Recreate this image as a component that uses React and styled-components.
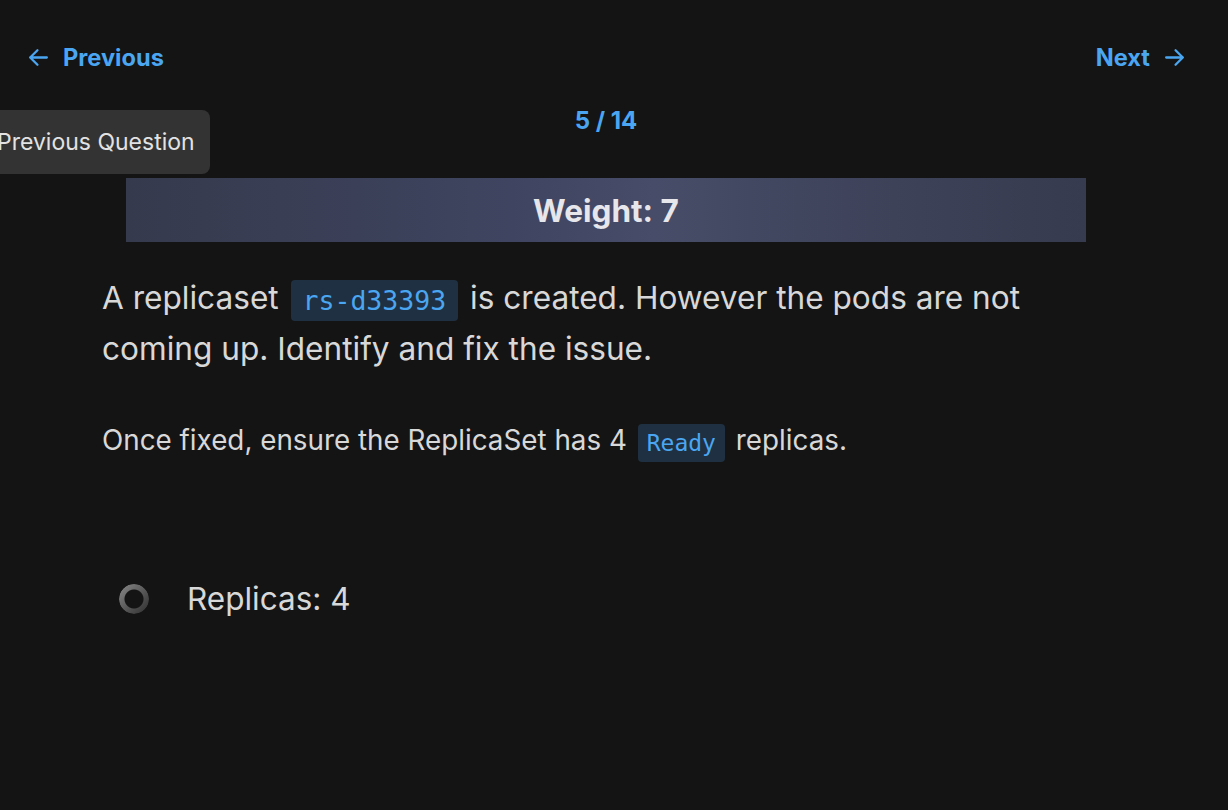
import React from 'react'
import styled, { createGlobalStyle } from 'styled-components'

const GlobalStyle = createGlobalStyle`
    html, body {
        margin: 0;
        padding: 0;
        background: #141414;
    }
    body {
        font-family: Inter, "Noto Sans", sans-serif;
        color: #d6d6d6;
        overflow: hidden;
    }
`

const Page = styled.div`
    position: relative;
    width: 1212px;
    height: 810px;
    padding-top: 35px;
    box-sizing: border-box;
`

const Nav = styled.div`
    display: flex;
    justify-content: space-between;
    align-items: center;
    height: 44px;
    padding: 0 25px 0 26px;
`

const NavLink = styled.a`
    display: flex;
    align-items: center;
    gap: 12px;
    color: #4ba6f1;
    font-size: 23.6px;
    font-weight: 700;
    cursor: pointer;
    svg {
        width: 25px;
        height: 25px;
    }
`

const Tooltip = styled.div`
    position: absolute;
    left: -19px;
    top: 110px;
    height: 64px;
    display: flex;
    align-items: center;
    padding: 0 15px 0 16px;
    background: #333333;
    border-radius: 8px;
    color: #e2e2e2;
    font-size: 23px;
`

const Counter = styled.div`
    margin-top: 28px;
    text-align: center;
    color: #4ba6f1;
    font-size: 24px;
    font-weight: 700;
    line-height: 28px;
`

const Content = styled.div`
    width: 1008px;
    margin: 0 auto;
`

const WeightBar = styled.div`
    margin: 43px 24px 0;
    height: 64px;
    display: flex;
    align-items: center;
    justify-content: center;
    background: linear-gradient(90deg, #353a4d 0%, #3f4460 40%, #474c68 55%, #3d4259 80%, #363b4f 100%);
    color: #e6e6eb;
    font-size: 31.5px;
    font-weight: 700;
`

const Question = styled.p`
    margin: 30px 0 0;
    font-size: 31.6px;
    line-height: 51px;
    color: #d8d8d8;
`

const Note = styled.p`
    margin: 46px 0 0;
    font-size: 27.8px;
    line-height: 40px;
    color: #d8d8d8;
`

const Code = styled.code`
    display: inline-block;
    font-family: "DejaVu Sans Mono", "Liberation Mono", monospace;
    font-size: ${p => p.$size}px;
    line-height: ${p => p.$height}px;
    padding: 0 ${p => p.$pad}px;
    margin: 0 3px;
    color: #4ba6f1;
    background: #1f3042;
    border-radius: 4px;
    vertical-align: ${p => p.$shift}px;
`

const Check = styled.div`
    margin: 117px 0 0 17px;
    display: flex;
    align-items: center;
    gap: 38px;
    font-size: 31.5px;
    line-height: 40px;
    color: #d8d8d8;
`

const Ring = styled.span`
    width: 30px;
    height: 30px;
    border-radius: 50%;
    background: linear-gradient(135deg, #8a8a8a 0%, #5a5a5a 50%, #2e2e2e 100%);
    -webkit-mask: radial-gradient(circle, transparent 9px, #000 10px);
    mask: radial-gradient(circle, transparent 9px, #000 10px);
`

const ArrowLeft = () => (
    <svg viewBox="0 0 24 24" fill="none" stroke="currentColor" strokeWidth="2.2" strokeLinecap="round" strokeLinejoin="round">
        <path d="M20 12H4M11 5l-7 7 7 7" />
    </svg>
)

const ArrowRight = () => (
    <svg viewBox="0 0 24 24" fill="none" stroke="currentColor" strokeWidth="2.2" strokeLinecap="round" strokeLinejoin="round">
        <path d="M4 12h16M13 5l7 7-7 7" />
    </svg>
)

const App = () => {
    return (
        <>
            <GlobalStyle />
            <Page>
                <Nav>
                    <NavLink><ArrowLeft />Previous</NavLink>
                    <NavLink>Next<ArrowRight /></NavLink>
                </Nav>
                <Counter>5 / 14</Counter>
                <Content>
                    <WeightBar>Weight: 7</WeightBar>
                    <Question>
                        A replicaset <Code $size={26.5} $height={41} $pad={12} $shift={-1}>rs-d33393</Code> is created. However the pods are not coming up. Identify and fix the issue.
                    </Question>
                    <Note>
                        Once fixed, ensure the ReplicaSet has 4 <Code $size={23} $height={38} $pad={9} $shift={-1}>Ready</Code> replicas.
                    </Note>
                    <Check>
                        <Ring />
                        Replicas: 4
                    </Check>
                </Content>
                <Tooltip>Previous Question</Tooltip>
            </Page>
        </>
    )
}

export default App
